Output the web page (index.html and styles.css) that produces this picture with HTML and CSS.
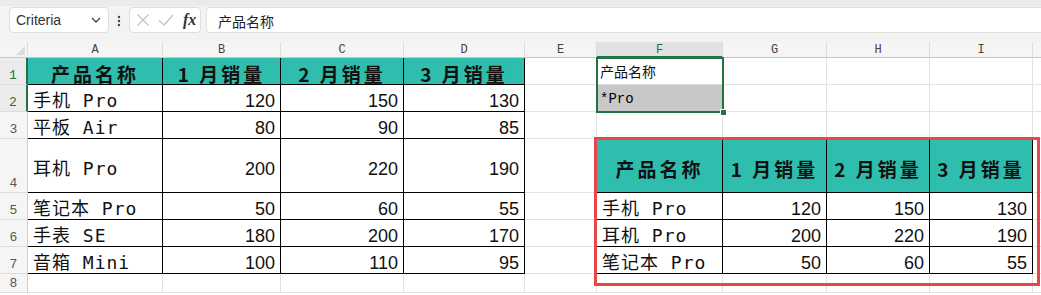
FILE: index.html
```html
<!DOCTYPE html>
<html lang="zh-CN">
<head>
    <meta charset="UTF-8">
    <title>Criteria</title>
    <link rel="stylesheet" href="styles.css">
</head>
<body>
    <!-- Formula bar -->
    <div class="toolbar">
        <div class="namebox">
            <span>Criteria</span>
            <svg width="10" height="6" viewBox="0 0 10 6"><path d="M1 1 L5 5 L9 1" fill="none" stroke="#444" stroke-width="1.3"/></svg>
        </div>
        <svg class="dots" width="4" height="12" viewBox="0 0 4 12"><circle cx="2" cy="2" r="1.2" fill="#444"/><circle cx="2" cy="6" r="1.2" fill="#444"/><circle cx="2" cy="10" r="1.2" fill="#444"/></svg>
        <div class="fxbox">
            <svg width="14" height="14" viewBox="0 0 14 14"><path d="M1.5 1.5 L12.5 12.5 M12.5 1.5 L1.5 12.5" stroke="#c4c4c4" stroke-width="1.3"/></svg>
            <svg width="16" height="14" viewBox="0 0 16 14"><path d="M1 7.5 L6 12 L15 2" fill="none" stroke="#c4c4c4" stroke-width="1.3"/></svg>
            <span class="fx">fx</span>
        </div>
        <div class="formula">产品名称</div>
    </div>

    <!-- Sheet -->
    <div class="sheet">
        <div class="ch corner"></div>
        <div class="ch">A</div><div class="ch">B</div><div class="ch">C</div><div class="ch">D</div>
        <div class="ch">E</div><div class="ch sel">F</div><div class="ch">G</div><div class="ch">H</div><div class="ch">I</div><div class="ch"></div>

        <div class="rh on">1</div>
        <div class="c hd tb">产品名称</div><div class="c hd tb">1 月销量</div><div class="c hd tb">2 月销量</div><div class="c hd tb">3 月销量</div>
        <div class="c"></div><div class="c small">产品名称</div><div class="c"></div><div class="c"></div><div class="c"></div><div class="c"></div>

        <div class="rh on">2</div>
        <div class="c name tb">手机 Pro</div><div class="c num tb">120</div><div class="c num tb">150</div><div class="c num tb">130</div>
        <div class="c"></div><div class="c crit">*Pro</div><div class="c"></div><div class="c"></div><div class="c"></div><div class="c"></div>

        <div class="rh">3</div>
        <div class="c name tb">平板 Air</div><div class="c num tb">80</div><div class="c num tb">90</div><div class="c num tb">85</div>
        <div class="c"></div><div class="c"></div><div class="c"></div><div class="c"></div><div class="c"></div><div class="c"></div>

        <div class="rh">4</div>
        <div class="c name tb">耳机 Pro</div><div class="c num tb">200</div><div class="c num tb">220</div><div class="c num tb">190</div>
        <div class="c edge"></div><div class="c hd tb">产品名称</div><div class="c hd tb">1 月销量</div><div class="c hd tb">2 月销量</div><div class="c hd tb">3 月销量</div><div class="c"></div>

        <div class="rh">5</div>
        <div class="c name tb">笔记本 Pro</div><div class="c num tb">50</div><div class="c num tb">60</div><div class="c num tb">55</div>
        <div class="c edge"></div><div class="c name tb">手机 Pro</div><div class="c num tb">120</div><div class="c num tb">150</div><div class="c num tb">130</div><div class="c"></div>

        <div class="rh">6</div>
        <div class="c name tb">手表 SE</div><div class="c num tb">180</div><div class="c num tb">200</div><div class="c num tb">170</div>
        <div class="c edge"></div><div class="c name tb">耳机 Pro</div><div class="c num tb">200</div><div class="c num tb">220</div><div class="c num tb">190</div><div class="c"></div>

        <div class="rh">7</div>
        <div class="c name tb">音箱 Mini</div><div class="c num tb">100</div><div class="c num tb">110</div><div class="c num tb">95</div>
        <div class="c edge"></div><div class="c name tb">笔记本 Pro</div><div class="c num tb">50</div><div class="c num tb">60</div><div class="c num tb">55</div><div class="c"></div>

        <div class="rh">8</div>
        <div class="c"></div><div class="c"></div><div class="c"></div><div class="c"></div><div class="c"></div>
        <div class="c"></div><div class="c"></div><div class="c"></div><div class="c"></div><div class="c"></div>

        <!-- selection of F1:F2 -->
        <div class="selection"><span class="handle"></span></div>
        <!-- red frame drawn over the result table -->
        <div class="frame"></div>
    </div>
</body>
</html>
```

FILE: styles.css
```css
html, body {
    margin: 0;
    height: 100%;
    overflow: hidden;
    background-color: #ffffff;
    font-family: "Liberation Sans", Arial, sans-serif;
    color: #111;
}
.toolbar {
    height: 42px;
    box-sizing: border-box;
    background-color: #f3f3f3;
    border-top: 6px solid #ebebeb;
    display: flex;
    align-items: flex-start;
    padding: 1px 0 0 9px;
}
.namebox {
    width: 100px;
    height: 26px;
    box-sizing: border-box;
    background-color: #fff;
    border: 1px solid #dedede;
    border-radius: 4px;
    display: flex;
    align-items: center;
    justify-content: space-between;
    padding: 0 7px 0 6px;
    font-size: 14px;
    color: #333;
}
.dots {
    margin: 8px 8px 0 8px;
}
.fxbox {
    width: 72px;
    height: 26px;
    box-sizing: border-box;
    background-color: #fff;
    border: 1px solid #dedede;
    border-radius: 4px;
    display: flex;
    align-items: center;
    gap: 8px;
    padding-left: 6px;
}
.fx {
    font-family: "Liberation Serif", serif;
    font-style: italic;
    font-weight: bold;
    font-size: 16px;
    color: #333;
    margin-left: 1px;
}
.formula {
    flex: 1;
    height: 26px;
    box-sizing: border-box;
    margin-left: 5px;
    background-color: #fff;
    border: 1px solid #dedede;
    border-right: none;
    border-radius: 4px 0 0 4px;
    padding: 3px 0 0 11px;
    font-family: "Noto Sans CJK SC", sans-serif;
    font-size: 14px;
    color: #222;
}
.sheet {
    position: relative;
    display: grid;
    grid-template-columns: 28px 135px 118px 123px 121px 72px 126px 104px 103px 103px 1fr;
    grid-template-rows: 16px 27px 27px 27px 54px 27px 27px 27px 19px;
}
.sheet > div {
    box-sizing: border-box;
}
.ch {
    background-color: #f5f5f5;
    border-right: 1px solid #dcdcdc;
    border-bottom: 1px solid #c8c8c8;
    font-family: "Liberation Mono", monospace;
    font-size: 12px;
    color: #444;
    text-align: center;
    line-height: 16px;
}
.ch.corner {
    position: relative;
}
.ch.corner::after {
    content: "";
    position: absolute;
    right: 2px;
    bottom: 2px;
    border-left: 9px solid transparent;
    border-bottom: 9px solid #dcdcdc;
}
.ch.sel {
    background-color: #e2e2e2;
    color: #217346;
    border-bottom: 2px solid #217346;
}
.rh {
    background-color: #f5f5f5;
    border-right: 1px solid #d0d0d0;
    border-bottom: 1px solid #dcdcdc;
    font-family: "Liberation Mono", monospace;
    font-size: 13px;
    color: #555;
    display: flex;
    align-items: flex-end;
    justify-content: center;
    padding-bottom: 1px;
}
.rh.on {
    color: #217346;
    background-color: #ececec;
    border-right: 2px solid #217346;
}
.c {
    border-right: 1px solid #e2e2e2;
    border-bottom: 1px solid #e2e2e2;
    display: flex;
    align-items: center;
    padding: 6px 5px 0 5px;
    line-height: 20px;
    white-space: pre;
}
.c.tb {
    border-right-color: #000;
    border-bottom-color: #000;
}
.c.edge {
    border-right-color: #000;
}
.c.hd {
    background-color: #2fbead;
    justify-content: center;
    font-family: "Noto Sans CJK SC", sans-serif;
    font-weight: bold;
    font-size: 19px;
    letter-spacing: 3px;
    color: #111;
}
.c.name {
    font-family: "DejaVu Sans Mono", "Noto Sans CJK SC", monospace;
    font-size: 18px;
    letter-spacing: 1px;
}
.c.num {
    justify-content: flex-end;
    font-size: 18px;
}
.c.small {
    font-family: "Noto Sans CJK SC", sans-serif;
    font-size: 14px;
    padding: 0 3px;
}
.c.crit {
    background-color: #c8c8c8;
    font-family: "Liberation Mono", monospace;
    font-size: 14px;
    color: #000;
    padding: 1px 3px 0 3px;
}
.selection {
    position: absolute;
    left: 596px;
    top: 15px;
    width: 128px;
    height: 56px;
    border: 2px solid #217346;
}
.handle {
    position: absolute;
    right: -5px;
    bottom: -5px;
    width: 5px;
    height: 5px;
    background-color: #217346;
    border: 1px solid #fff;
}
.frame {
    position: absolute;
    left: 594px;
    top: 95px;
    width: 446px;
    height: 149px;
    border: 3px solid #e8474a;
}
```
